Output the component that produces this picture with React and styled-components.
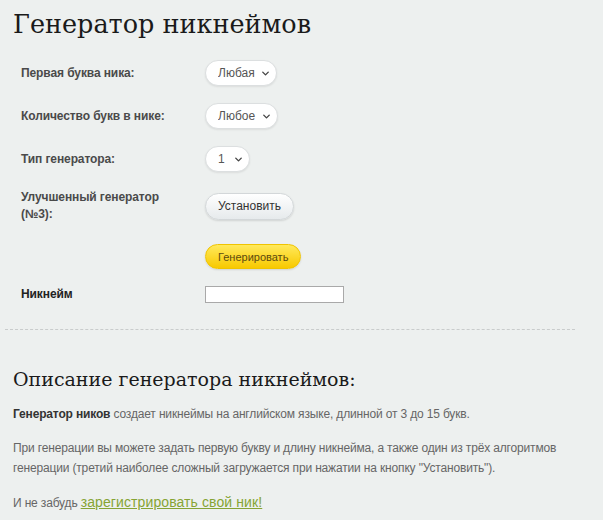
import React from 'react';
import styled, { createGlobalStyle } from 'styled-components';
import { ChevronDown } from 'lucide-react';

const GlobalStyle = createGlobalStyle`
  body {
    margin: 0;
    background: #edf0ef;
    font-family: "Liberation Sans", Arial, sans-serif;
  }
`;

const Page = styled.div`
  width: 570px;
  padding: 0 0 0 5px;
`;

const Title = styled.h1`
  margin: 0;
  padding: 7px 0 0 8px;
  font-family: "DejaVu Serif", "Liberation Serif", serif;
  font-weight: normal;
  font-size: 25.5px;
  line-height: 34px;
  color: #1a1a1a;
`;

const Form = styled.div`
  display: grid;
  grid-template-columns: 184px 1fr;
  row-gap: 17px;
  align-items: center;
  padding: 19px 0 0 16px;
`;

const Label = styled.div`
  font-size: 12px;
  font-weight: bold;
  line-height: 17px;
  letter-spacing: -0.1px;
  color: ${(p) => (p.dark ? '#222' : '#4a4a4a')};
`;

const Cell = styled.div`
  display: flex;
  align-items: center;
  margin-top: ${(p) => p.shift || 0}px;
`;

const SelectWrap = styled.div`
  position: relative;
  width: ${(p) => p.width}px;
  height: 26px;
`;

const Select = styled.select`
  appearance: none;
  width: 100%;
  height: 100%;
  border: 1px solid #dcdfe0;
  border-radius: 13px;
  background: #fff;
  box-shadow: 0 1px 2px rgba(0, 0, 0, 0.08);
  padding: 0 0 0 12px;
  font-family: "Liberation Sans", Arial, sans-serif;
  font-size: 12px;
  color: #555;
  outline: none;
`;

const Chevron = styled(ChevronDown)`
  position: absolute;
  right: 6px;
  top: 8px;
  pointer-events: none;
  color: #444;
`;

const Button = styled.button`
  height: ${(p) => (p.yellow ? 25 : 27)}px;
  padding: 0 12px;
  border-radius: 14px;
  border: 1px solid ${(p) => (p.yellow ? '#f0c400' : '#d3d7d9')};
  background: ${(p) =>
    p.yellow
      ? 'linear-gradient(#ffe95c, #f8c900)'
      : 'linear-gradient(#ffffff, #e6eaec)'};
  box-shadow: 0 1px 2px rgba(0, 0, 0, 0.12);
  font-family: "Liberation Sans", Arial, sans-serif;
  font-size: ${(p) => (p.yellow ? 11 : 12)}px;
  color: ${(p) => (p.yellow ? '#5c4a10' : '#333')};
  cursor: pointer;
`;

const Input = styled.input`
  box-sizing: border-box;
  width: 139px;
  height: 17px;
  border: 1px solid #a9a9a9;
  background: #fff;
  padding: 0 3px;
`;

const Divider = styled.hr`
  margin: 26px 0 0;
  border: 0;
  border-top: 1px dashed #c9cccc;
`;

const Subtitle = styled.h2`
  margin: 34px 0 0 8px;
  font-family: "DejaVu Serif", "Liberation Serif", serif;
  font-weight: normal;
  font-size: 19px;
  line-height: 30px;
  color: #1a1a1a;
`;

const Text = styled.p`
  margin: 10px 0 14px 8px;
  font-size: 12px;
  line-height: 20px;
  letter-spacing: -0.16px;
  color: #666;
  strong {
    color: #333;
  }
`;

const Link = styled.a`
  color: #86a434;
  font-size: 14px;
  letter-spacing: 0.1px;
  text-decoration: underline;
`;

const Picker = ({ width, value, options }) => (
  <SelectWrap width={width}>
    <Select defaultValue={value}>
      {options.map((o) => (
        <option key={o}>{o}</option>
      ))}
    </Select>
    <Chevron size={11} strokeWidth={3} />
  </SelectWrap>
);

export default function App() {
  return (
    <Page>
      <GlobalStyle />
      <Title>Генератор никнеймов</Title>
      <Form>
        <Label>Первая буква ника:</Label>
        <Cell>
          <Picker width={72} value="Любая" options={['Любая', 'A', 'B', 'C']} />
        </Cell>
        <Label>Количество букв в нике:</Label>
        <Cell>
          <Picker width={73} value="Любое" options={['Любое', '3', '4', '5']} />
        </Cell>
        <Label>Тип генератора:</Label>
        <Cell>
          <Picker width={45} value="1" options={['1', '2', '3']} />
        </Cell>
        <Label>
          Улучшенный генератор
          <br />
          (№3):
        </Label>
        <Cell>
          <Button type="button">Установить</Button>
        </Cell>
        <span />
        <Cell shift={4}>
          <Button type="button" yellow>
            Генерировать
          </Button>
        </Cell>
        <Label dark>Никнейм</Label>
        <Cell>
          <Input type="text" />
        </Cell>
      </Form>
      <Divider />
      <Subtitle>Описание генератора никнеймов:</Subtitle>
      <Text>
        <strong>Генератор ников</strong> создает никнеймы на английском языке, длинной от 3 до 15 букв.
      </Text>
      <Text>
        При генерации вы можете задать первую букву и длину никнейма, а также один из трёх алгоритмов
        генерации (третий наиболее сложный загружается при нажатии на кнопку "Установить").
      </Text>
      <Text>
        И не забудь <Link href="#">зарегистрировать свой ник!</Link>
      </Text>
    </Page>
  );
}
